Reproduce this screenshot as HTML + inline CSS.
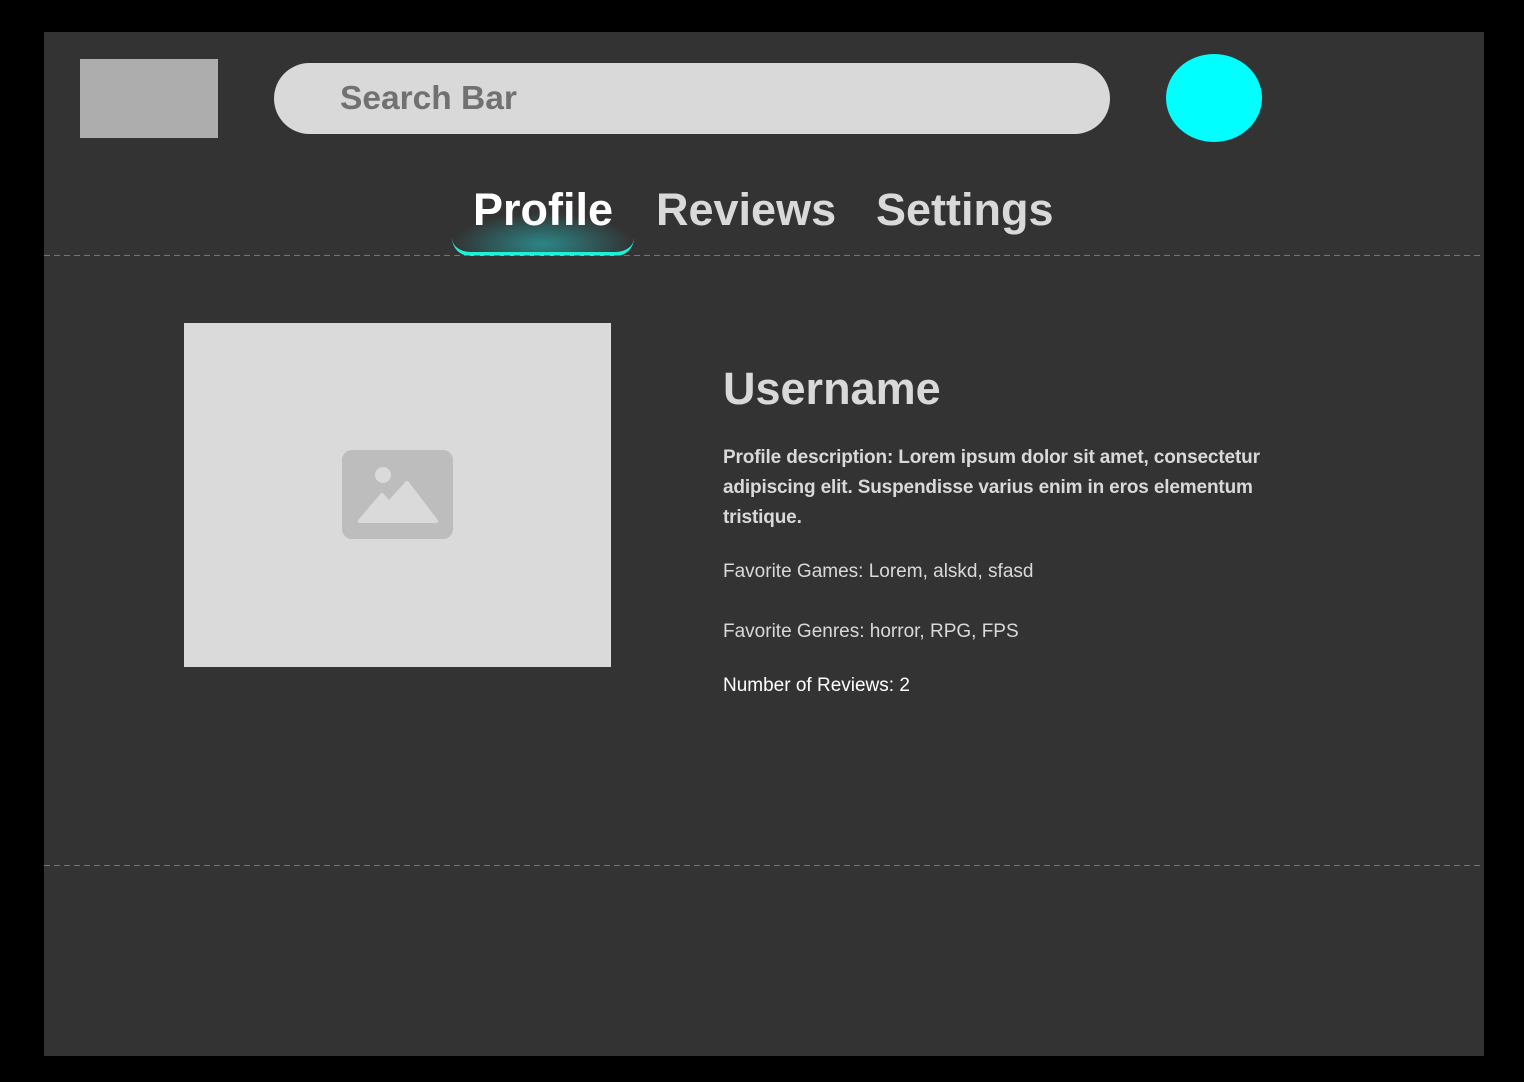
<!DOCTYPE html>
<html><head><meta charset="utf-8"><style>
*{margin:0;padding:0;box-sizing:border-box}
body{width:1524px;height:1082px;background:#000;position:relative;overflow:hidden;font-family:"Liberation Sans",sans-serif}
.frame{position:absolute;left:44px;top:32px;width:1440px;height:1024px;background:#333}
.abs{position:absolute}
.dash{position:absolute;left:0;width:1440px;height:1px;background:repeating-linear-gradient(90deg,#9747ff 0 6px,transparent 6px 10px)}
.tab{position:absolute;top:151px;font-size:45px;font-weight:bold;color:#d9d9d9;line-height:54px}
.txt{position:absolute;left:679px;color:#d9d9d9;font-size:19px;line-height:30px}
</style></head><body>
<div class="frame">
 <div class="abs" style="left:36px;top:27px;width:138px;height:79px;background:#adadad"></div>
 <div class="abs" style="left:230px;top:31px;width:836px;height:71px;background:#d9d9d9;border-radius:36px"></div>
 <div class="abs" style="left:296px;top:45px;font-size:33.5px;font-weight:bold;color:#717171;line-height:44px">Search Bar</div>
 <div class="abs" style="left:1122px;top:22px;width:96px;height:88px;background:#00ffff;border-radius:50%"></div>
 <div class="abs" style="left:408px;top:180px;width:182px;height:44px;border-radius:0 0 18px 18px;border-bottom:4px solid #1ff0d8;background:radial-gradient(ellipse at 50% 80%,rgba(40,170,170,.7),rgba(51,51,51,0) 70%)"></div>
 <div class="tab" style="left:429px;color:#fff">Profile</div>
 <div class="tab" style="left:612px">Reviews</div>
 <div class="tab" style="left:832px">Settings</div>
 <div class="dash" style="top:223px"></div>
 <div class="abs" style="left:140px;top:291px;width:427px;height:344px;background:#dadada"></div>
 <svg class="abs" style="left:298px;top:418px" width="112" height="90" viewBox="0 0 112 90">
  <rect x="0" y="0" width="111" height="89" rx="10" fill="#bdbdbd"/>
  <circle cx="41" cy="25" r="8" fill="#dadada"/>
  <path d="M18 71 L40 45 L47 53 L65 33 L94 71 Z" fill="#dadada" stroke="#dadada" stroke-width="4" stroke-linejoin="round"/>
 </svg>
 <div class="abs" style="left:679px;top:329px;font-size:45px;font-weight:bold;color:#d9d9d9;line-height:56px">Username</div>
 <div class="txt" style="top:411px;font-weight:bold;letter-spacing:-0.15px">Profile description: Lorem ipsum dolor sit amet, consectetur<br>adipiscing elit. Suspendisse varius enim in eros elementum<br>tristique.</div>
 <div class="txt" style="top:525px">Favorite Games: Lorem, alskd, sfasd</div>
 <div class="txt" style="top:585px">Favorite Genres: horror, RPG, FPS</div>
 <div class="txt" style="top:639px;color:#fff">Number of Reviews: 2</div>
 <div class="dash" style="top:833px"></div>
</div>
</body></html>
